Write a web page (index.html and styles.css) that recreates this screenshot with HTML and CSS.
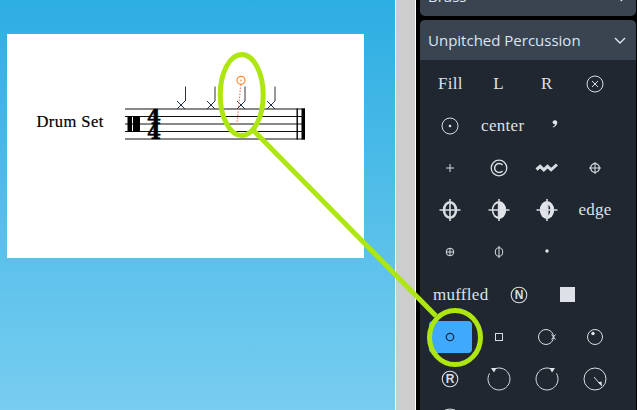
FILE: index.html
```html
<!DOCTYPE html>
<html lang="en">
<head>
<meta charset="utf-8">
<title>Drum Set palette</title>
<link rel="stylesheet" href="styles.css">
</head>
<body>
<main class="canvas">
  <section class="page">
    <svg class="score" viewBox="0 0 357 224" width="357" height="224">
      <text class="instrument" x="29.500" y="93">Drum Set</text>
      <g class="staff">
        <line x1="118" x2="298" y1="75" y2="75"/>
        <line x1="118" x2="298" y1="82.5" y2="82.5"/>
        <line x1="118" x2="298" y1="90" y2="90"/>
        <line x1="118" x2="298" y1="97.5" y2="97.5"/>
        <line x1="118" x2="298" y1="105" y2="105"/>
      </g>
      <rect x="120.500" y="82" width="4.500" height="16"/>
      <rect x="126" y="82" width="7" height="16"/>
      <text class="timesig" x="140" y="89.500">4</text>
      <text class="timesig" x="140" y="105">4</text>
      <rect x="289.500" y="74.500" width="1.400" height="31"/>
      <rect x="294.500" y="74.500" width="3.500" height="31"/>
      <g class="stems">
        <line x1="178.500" x2="178.500" y1="52.500" y2="67"/>
        <line x1="208" x2="208" y1="52.500" y2="67"/>
        <line x1="238" x2="238" y1="52.500" y2="67"/>
        <line x1="268" x2="268" y1="52.500" y2="67"/>
      </g>
      <g class="heads">
        <path d="M170 67l8 8M178 67l-8 8"/>
        <path d="M200 67l8 8M208 67l-8 8"/>
        <path d="M230 67l8 8M238 67l-8 8"/>
        <path d="M260 67l8 8M268 67l-8 8"/>
      </g>
      <line class="guide" x1="233.800" y1="50.500" x2="229.800" y2="91"/>
      <circle class="ghost" cx="234" cy="46.300" r="4"/>
      <circle class="ghost-dot" cx="234" cy="46.300" r="0.900"/>
    </svg>
  </section>
</main>
<div class="divider"></div>
<aside class="panel">
  <section class="card collapsed">
    <header class="card-head">
      <span>Brass</span>
      <svg class="chev" viewBox="0 0 12 12" width="12" height="12"><path d="M8 1L3 6l5 5"/></svg>
    </header>
  </section>
  <section class="card">
    <header class="card-head">
      <span>Unpitched Percussion</span>
      <svg class="chev" viewBox="0 0 12 12" width="12" height="12"><path d="M1 4l5 5 5-5"/></svg>
    </header>
    <div class="grid">
      <div class="cell"><span class="label">Fill</span></div>
      <div class="cell"><span class="label">L</span></div>
      <div class="cell"><span class="label">R</span></div>
      <div class="cell"><svg class="ico" viewBox="0 0 32 32"><circle cx="16" cy="16" r="8"/><path d="M13 13l6 6M19 13l-6 6"/></svg></div>

      <div class="cell"><svg class="ico" viewBox="0 0 32 32"><circle cx="16" cy="16" r="8"/><circle class="fill" cx="16" cy="16" r="1.300"/></svg></div>
      <div class="cell"><span class="label">center</span></div>
      <div class="cell"><svg class="ico" viewBox="0 0 32 32"><path class="fill" d="M13.500 12.500a2.400 2.400 0 1 1 4.600 1c-.5 2-2 3.200-4 4l-.4-.6c1.400-.8 2.200-1.600 2.300-2.600a2.400 2.400 0 0 1-2.500-1.800z"/></svg></div>
      <div class="cell cell-last"></div>

      <div class="cell"><svg class="ico" viewBox="0 0 32 32"><path d="M12 16h8M16 12v8"/></svg></div>
      <div class="cell"><svg class="ico" viewBox="0 0 32 32"><circle class="med" cx="16" cy="16" r="7.800"/><path class="thick" d="M19.500 13a4.500 4.500 0 1 0 0 6"/></svg></div>
      <div class="cell"><svg class="ico" viewBox="0 0 32 32"><path class="zig" d="M5.500 17.500l3.700-3.200 3.600 3.500 3.700-3.500 3.600 3.500 5.900-5.300"/></svg></div>
      <div class="cell"><svg class="ico" viewBox="0 0 32 32"><circle class="med" cx="16" cy="16" r="4.300"/><path d="M10 16h12M16 10v12"/></svg></div>

      <div class="cell"><svg class="ico" viewBox="0 0 32 32"><ellipse class="ring" cx="16" cy="16" rx="6" ry="7.800"/><path class="thin2" d="M5.500 16h21M16 5v22"/></svg></div>
      <div class="cell"><svg class="ico" viewBox="0 0 32 32"><ellipse class="fill" cx="16" cy="16" rx="7.200" ry="9"/><path class="lobe" d="M14.800 9.500a4.500 6.500 0 0 0 0 13z"/><path class="thin2" d="M5.500 16h21M16 5v22"/></svg></div>
      <div class="cell"><svg class="ico" viewBox="0 0 32 32"><ellipse class="fill" cx="16" cy="16" rx="7.200" ry="9"/><path class="lobe" d="M17.500 10.500a3 6 0 0 1 0 11z"/><path class="thin2" d="M5.500 16h21M16 5v22"/></svg></div>
      <div class="cell"><span class="label">edge</span></div>

      <div class="cell"><svg class="ico" viewBox="0 0 32 32"><circle cx="16" cy="16" r="3.800"/><path d="M12.200 16h7.600M16 12.200v7.600"/></svg></div>
      <div class="cell"><svg class="ico" viewBox="0 0 32 32"><ellipse cx="16" cy="16" rx="3.700" ry="4.200"/><path d="M16 10v12"/></svg></div>
      <div class="cell"><svg class="ico" viewBox="0 0 32 32"><circle class="fill" cx="16" cy="15" r="1.700"/></svg></div>
      <div class="cell cell-last"></div>

      <div class="cell"><span class="label">muffled</span></div>
      <div class="cell"><svg class="ico" viewBox="0 0 32 32"><circle class="hair" cx="16" cy="16" r="7.800"/><text class="ico-text" x="16" y="20.300">N</text></svg></div>
      <div class="cell"><span class="square"></span></div>
      <div class="cell cell-last"></div>

      <div class="cell active"><svg class="ico" viewBox="0 0 32 32"><circle cx="16" cy="16" r="3.700"/></svg></div>
      <div class="cell"><svg class="ico" viewBox="0 0 32 32"><rect x="12.500" y="12.500" width="7" height="7"/></svg></div>
      <div class="cell"><svg class="ico" viewBox="0 0 32 32"><circle cx="15" cy="16" r="7.500"/><path d="M20.500 13.500l4 5M24.500 13.500l-4 5"/></svg></div>
      <div class="cell"><svg class="ico" viewBox="0 0 32 32"><circle cx="16" cy="16" r="7.500"/><circle class="fill" cx="14" cy="12.500" r="1.700"/></svg></div>

      <div class="cell"><svg class="ico" viewBox="0 0 32 32"><circle class="hair" cx="16" cy="16" r="7.800"/><text class="ico-text" x="16" y="20.300">R</text></svg></div>
      <div class="cell"><svg class="ico" viewBox="0 0 32 32"><path d="M13 5.400a11 11 0 1 1-6.500 5"/><path class="fill" d="M8 5h5.500l-2.500 4.500z"/></svg></div>
      <div class="cell"><svg class="ico" viewBox="0 0 32 32"><path d="M19 5.400a11 11 0 1 0 6.500 5"/><path class="fill" d="M24 5h-5.500l2.500 4.500z"/></svg></div>
      <div class="cell"><svg class="ico" viewBox="0 0 32 32"><circle cx="16" cy="16" r="11"/><path d="M15 14l6 7"/><path class="fill" d="M19 19.500l3.500-1 .5 5z"/></svg></div>

      <div class="cell"><svg class="ico" viewBox="0 0 32 32"><circle cx="16" cy="16" r="12"/></svg></div>
    </div>
  </section>
</aside>
<svg class="callouts" viewBox="0 0 637 410" width="637" height="410">
  <ellipse cx="241.700" cy="95" rx="21.500" ry="40.500"/>
  <path d="M253 130L436 316"/>
  <ellipse cx="455" cy="337.500" rx="25.500" ry="27"/>
</svg>
</body>
</html>
```

FILE: styles.css
```css
html, body {
  margin: 0;
  padding: 0;
  height: 100%;
}
body {
  display: flex;
  width: 637px;
  height: 410px;
  overflow: hidden;
  position: relative;
  background: #000;
}
.canvas {
  flex: 0 0 395px;
  padding: 34px 0 0 7px;
  box-sizing: border-box;
  background: linear-gradient(180deg, #2daee2 0%, #78cdf0 100%);
}
.page {
  width: 357px;
  height: 224px;
  background: #fff;
}
.score {
  display: block;
}
.instrument {
  font-family: "Liberation Serif", serif;
  font-size: 16.500px;
  letter-spacing: 0.450px;
  fill: #000;
  stroke: #000;
  stroke-width: 0.200;
}
.staff line {
  stroke: #111;
  stroke-width: 1;
}
.timesig {
  font-family: "DejaVu Serif", serif;
  font-size: 20px;
  font-weight: 700;
  stroke: #000;
  stroke-width: 0.600;
}
.stems line {
  stroke: #333;
  stroke-width: 1;
}
.heads path {
  stroke: #1d2f4a;
  stroke-width: 1;
  fill: none;
}
.guide {
  stroke: #f0806a;
  stroke-width: 1.200;
  stroke-dasharray: 1.500 1.500;
}
.ghost {
  fill: #fff;
  stroke: #f58a30;
  stroke-width: 1.200;
}
.ghost-dot {
  fill: #f0a080;
}
.divider {
  flex: 0 0 19px;
  background: #cdcdcd;
  border-left: 1px solid #fff;
  border-right: 1px solid #fff;
}
.panel {
  flex: 1;
  min-width: 0;
  box-sizing: border-box;
  height: 434px;
  overflow: hidden;
  padding: 0 1px 0 4px;
  margin-top: -24px;
  background: #000;
}
.card {
  background: #212730;
  border-radius: 5px;
  margin-bottom: 4px;
  overflow: hidden;
}
.card-head {
  height: 40px;
  box-sizing: border-box;
  padding: 0 10px 0 8px;
  display: flex;
  align-items: center;
  justify-content: space-between;
  background: #3a4350;
  font-family: "Open Sans", sans-serif;
  font-size: 15px;
  color: #dbe6f1;
}
.chev {
  fill: none;
  stroke: #dbe6f1;
  stroke-width: 1.400;
}
.grid {
  display: flex;
  flex-wrap: wrap;
  padding: 3px 0 0 6.400px;
}
.cell {
  flex: none;
  box-sizing: border-box;
  min-width: 43.200px;
  height: 32px;
  margin: 5.050px 2.500px;
  padding: 0 4px;
  display: flex;
  align-items: center;
  justify-content: center;
  border-radius: 4px;
  color: #dde1e6;
}
.cell-last {
  flex-basis: 100%;
  height: 0;
  margin: 0;
  padding: 0;
}
.label {
  font-family: "Liberation Serif", serif;
  font-size: 17px;
  letter-spacing: 0.300px;
  white-space: nowrap;
}
.ico {
  width: 32px;
  height: 32px;
  flex: none;
  overflow: visible;
  fill: none;
  stroke: #d9dde3;
  stroke-width: 1;
}
.ico .fill {
  fill: #e2e6eb;
  stroke: none;
}
.ico .med {
  stroke-width: 1.300;
}
.ico .hair {
  stroke-width: 1.100;
}
.ico .thick {
  stroke-width: 1.500;
}
.ico .ring {
  stroke-width: 2.600;
}
.ico .thin2 {
  stroke-width: 1.600;
}
.ico .lobe {
  fill: #212730;
  stroke: none;
}
.ico .zig {
  stroke-width: 3;
}
.ico-text {
  font-family: "Liberation Sans", sans-serif;
  font-size: 12px;
  font-weight: 700;
  text-anchor: middle;
  fill: #d9dde3;
  stroke: none;
}
.square {
  display: block;
  width: 15px;
  height: 15px;
  background: #dde1e7;
}
.active {
  background: #3fa9fd;
}
.active .ico {
  stroke: #14263f;
  stroke-width: 1.200;
}
.callouts {
  position: absolute;
  left: 0;
  top: 0;
  pointer-events: none;
  fill: none;
  stroke: #aee612;
  stroke-width: 5;
}
```
